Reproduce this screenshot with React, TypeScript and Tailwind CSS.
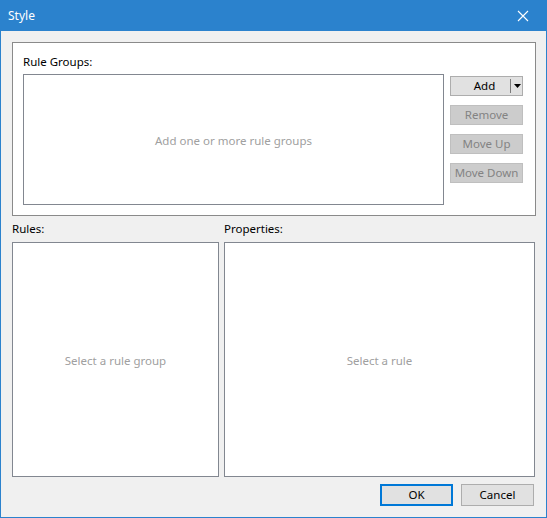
export default function App() {
  const font = { fontFamily: '"Noto Sans", "Open Sans", sans-serif' };
  return (
    <div
      className="w-[547px] h-[518px] flex flex-col bg-[#f0f0f0] border border-t-0 border-[#2b82cd] text-[11.5px] text-black overflow-hidden"
      style={font}
    >
      <div className="h-[31px] shrink-0 bg-[#2b82cd] flex items-center justify-between pl-[8px] pr-[18px] -mx-px">
        <span className="text-white text-[12px]">Style</span>
        <svg width="12" height="12" viewBox="0 0 12 12">
          <path d="M1 1 L11 11 M11 1 L1 11" stroke="#ffffff" strokeWidth="1.1" fill="none" />
        </svg>
      </div>

      <div className="flex flex-col pl-[11px] pr-[10px]">
        <div className="mt-[11px] h-[174px] bg-white border border-[#8a8a8a] flex flex-col pl-[10px] pr-[11px] pt-[10px]">
          <div className="h-[16px] leading-[16px] pt-px">Rule Groups:</div>
          <div className="mt-[5px] flex gap-[6px]">
            <div className="w-[421px] h-[131px] border border-[#828790] bg-white flex items-center justify-center text-[#a0a0a0] pt-[3px]">
              Add one or more rule groups
            </div>
            <div className="flex flex-col gap-[9px] pt-[2px]">
              <div className="relative w-[73px] h-[20px] bg-[#e1e1e1] border border-[#adadad] flex items-center">
                <span className="w-[59px] text-center pl-[8px]">Add</span>
                <span className="w-px h-[14px] bg-[#7a7a7a]" />
                <svg className="ml-[3px]" width="7" height="4" viewBox="0 0 7 4">
                  <path d="M0 0 H7 L3.5 4 Z" fill="#000000" />
                </svg>
              </div>
              <div className="w-[73px] h-[20px] bg-[#cccccc] border border-[#bfbfbf] flex items-center justify-center text-[#838383]">
                Remove
              </div>
              <div className="w-[73px] h-[20px] bg-[#cccccc] border border-[#bfbfbf] flex items-center justify-center text-[#838383]">
                Move Up
              </div>
              <div className="w-[73px] h-[20px] bg-[#cccccc] border border-[#bfbfbf] flex items-center justify-center text-[#838383]">
                Move Down
              </div>
            </div>
          </div>
        </div>

        <div className="flex gap-[5px] mt-[5px]">
          <div className="flex flex-col w-[207px]">
            <div className="h-[16px] leading-[16px]">Rules:</div>
            <div className="mt-[5px] h-[235px] border border-[#828790] bg-white flex items-center justify-center text-[#a0a0a0] pt-[3px]">
              Select a rule group
            </div>
          </div>
          <div className="flex flex-col w-[311px]">
            <div className="h-[16px] leading-[16px]">Properties:</div>
            <div className="mt-[5px] h-[235px] border border-[#828790] bg-white flex items-center justify-center text-[#a0a0a0] pt-[3px]">
              Select a rule
            </div>
          </div>
        </div>

        <div className="flex justify-end gap-[8px] mt-[7px] pr-[2px]">
          <div className="w-[73px] h-[22px] bg-[#e1e1e1] border-2 border-[#0078d7] flex items-center justify-center">
            OK
          </div>
          <div className="w-[73px] h-[22px] bg-[#e1e1e1] border border-[#adadad] flex items-center justify-center">
            Cancel
          </div>
        </div>
      </div>
    </div>
  );
}
